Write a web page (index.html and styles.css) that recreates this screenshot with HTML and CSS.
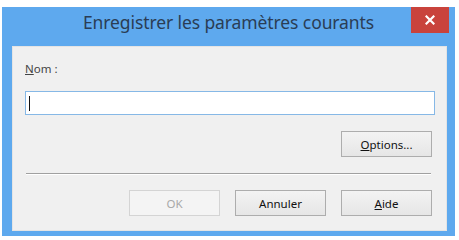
FILE: index.html
```html
<!DOCTYPE html>
<html lang="fr">
<head>
    <meta charset="UTF-8">
    <title>Enregistrer les paramètres courants</title>
    <link rel="stylesheet" href="styles.css">
</head>
<body>
    <div class="window">
        <div class="titlebar">
            <span class="title">Enregistrer les paramètres courants</span>
            <button class="close-btn" aria-label="Fermer">
                <svg width="10" height="10" viewBox="0 0 10 10">
                    <path d="M1.5 1.5 L8.5 8.5 M8.5 1.5 L1.5 8.5" stroke="#fff" stroke-width="2.2" stroke-linecap="square"/>
                </svg>
            </button>
        </div>
        <div class="client">
            <label class="field-label" for="nom"><u>N</u>om :</label>
            <div class="input-box">
                <span class="caret"></span>
            </div>
            <div class="row options-row">
                <button class="btn"><u>O</u>ptions...</button>
            </div>
            <div class="separator"></div>
            <div class="row actions">
                <button class="btn disabled">OK</button>
                <button class="btn">Annuler</button>
                <button class="btn"><u>A</u>ide</button>
            </div>
        </div>
    </div>
</body>
</html>
```

FILE: styles.css
```css
body {
    margin: 0;
    background-color: #fff;
    font-family: "Noto Sans", "Open Sans", sans-serif;
}
.window {
    margin: 7px 0 0 2px;
    width: 453px;
    height: 229px;
    background-color: #5ea9ee;
    display: flex;
    flex-direction: column;
}
.titlebar {
    height: 39px;
    position: relative;
    display: flex;
    justify-content: center;
}
.title {
    font-size: 17.5px;
    color: #2a3d55;
    margin-top: 3px;
    letter-spacing: -0.1px;
}
.close-btn {
    position: absolute;
    top: 0;
    right: 6px;
    width: 38px;
    height: 26px;
    border: none;
    padding: 0;
    background-color: #c9433c;
    display: flex;
    align-items: center;
    justify-content: center;
}
.client {
    flex: 1;
    margin: 0 8px 5px 10px;
    background-color: #f0f0f0;
    border: 1px solid #e4e4e4;
    padding: 0 14px 0 12px;
    font-size: 11.5px;
    color: #222;
}
.field-label {
    display: block;
    margin-top: 14px;
    height: 16px;
    color: #444;
}
.input-box {
    margin-top: 14px;
    margin-right: -3px;
    height: 22px;
    background-color: #fff;
    border: 1px solid #86b8e6;
    display: flex;
    align-items: center;
}
.caret {
    width: 1px;
    height: 15px;
    margin-left: 3px;
    background-color: #111;
}
.row {
    display: flex;
    justify-content: flex-end;
    gap: 15px;
}
.options-row {
    margin-top: 16px;
}
.btn {
    width: 91px;
    height: 26px;
    font-family: inherit;
    font-size: 11.5px;
    color: #111;
    border: 1px solid #adadad;
    background: linear-gradient(#f3f3f3, #e6e6e6);
    padding: 0;
}
.btn.disabled {
    color: #a8a8a8;
    border-color: #d4d4d4;
    background: #f4f4f4;
}
.separator {
    margin: 16px 1px 0 1px;
    height: 1px;
    background-color: #a0a0a0;
    border-bottom: 1px solid #fff;
}
.actions {
    margin-top: 15px;
}
```
